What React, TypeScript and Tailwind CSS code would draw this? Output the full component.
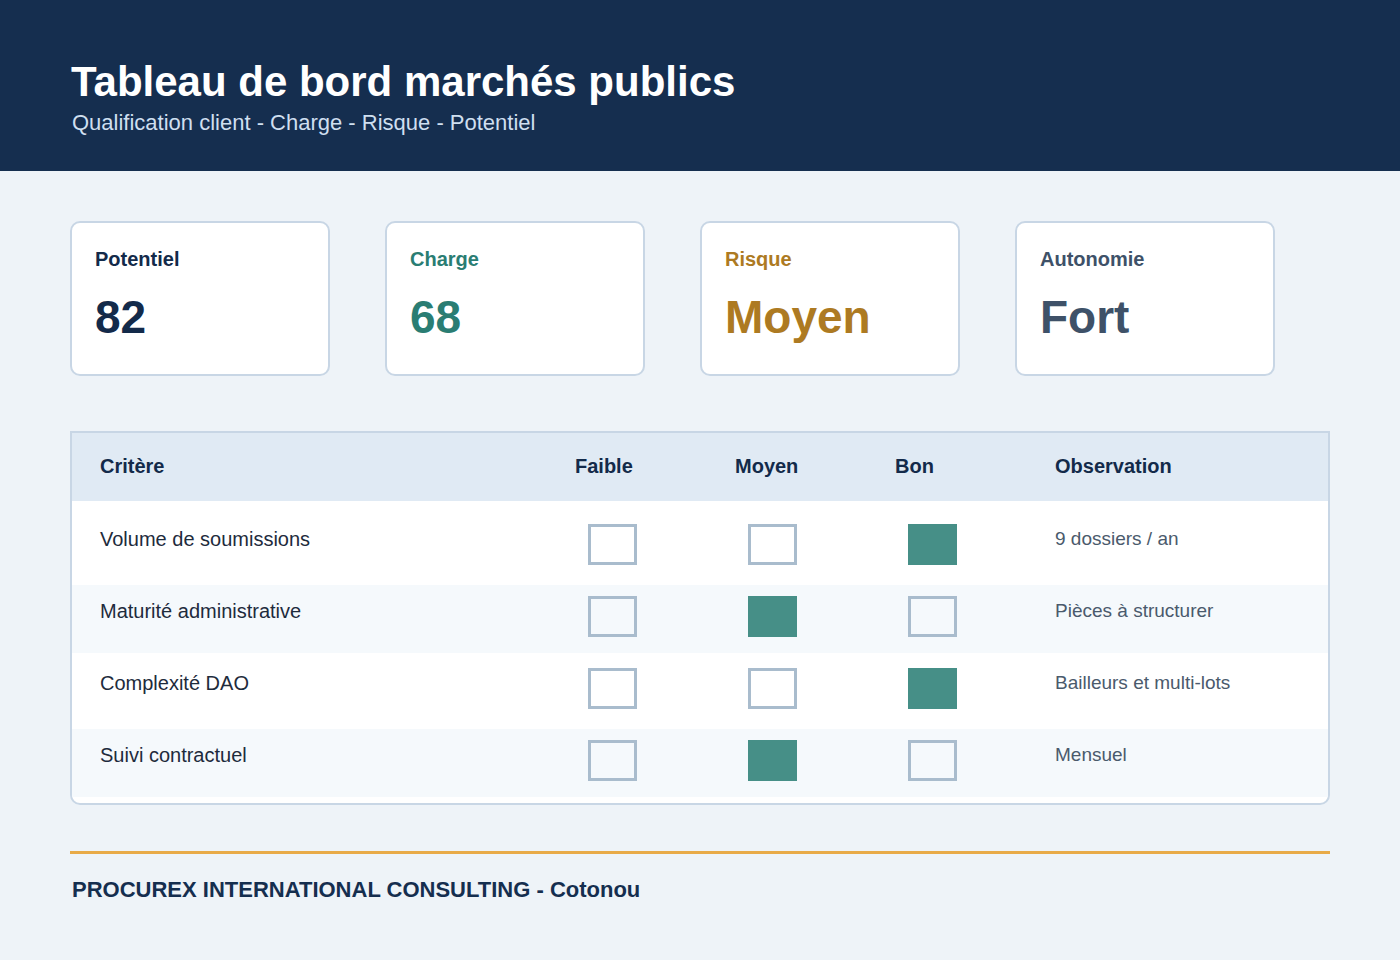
import React from "react";

const cards = [
  { l: "Potentiel", v: "82", c: "text-[#132a4a]" },
  { l: "Charge", v: "68", c: "text-[#2a7d73]" },
  { l: "Risque", v: "Moyen", c: "text-[#ad7a22]" },
  { l: "Autonomie", v: "Fort", c: "text-[#3e5168]" },
];
const rows: [string, number, string][] = [
  ["Volume de soumissions", 2, "9 dossiers / an"],
  ["Maturité administrative", 1, "Pièces à structurer"],
  ["Complexité DAO", 2, "Bailleurs et multi-lots"],
  ["Suivi contractuel", 1, "Mensuel"],
];

function Box({ on }: { on: boolean }) {
  return on ? (
    <div className="ml-[43px] mt-[11px] w-[49px] h-[41px] bg-[#468f87]" />
  ) : (
    <div className="ml-[43px] mt-[11px] w-[49px] h-[41px] border-[3px] border-[#a9bccd]" />
  );
}

export default function App() {
  return (
    <div className="w-[1400px] h-[960px] bg-[#eef3f8]" style={{ fontFamily: '"Liberation Sans", Arial, sans-serif' }}>
      <div className="h-[171px] bg-[#152e4f] pl-[71px] pt-[58px]">
        <div className="text-[42px] leading-[48px] font-bold text-white">Tableau de bord marchés publics</div>
        <div className="text-[22px] leading-[28px] text-[#cfdff0] ml-[1px] mt-[3px]">Qualification client - Charge - Risque - Potentiel</div>
      </div>
      <div className="flex gap-[55px] px-[70px] pt-[50px]">
        {cards.map((c) => (
          <div key={c.l} className="w-[260px] h-[155px] bg-white border-2 border-[#c8d6e5] rounded-[10px] pl-[23px] pt-[22px]">
            <div className={`text-[20px] leading-[28px] font-bold ${c.c}`}>{c.l}</div>
            <div className={`text-[46px] leading-[52px] font-bold mt-[18px] ${c.c}`}>{c.v}</div>
          </div>
        ))}
      </div>
      <div className="mx-[70px] mt-[55px] bg-white border-2 border-[#c8d6e5] rounded-b-[10px] overflow-hidden">
        <div className="flex h-[70px] items-center bg-[#e0eaf4] text-[20px] font-bold text-[#132a4a] -mt-[2px] -mx-[2px]">
          <div className="w-[475px] pl-[30px]">Critère</div>
          <div className="w-[160px] pl-[30px]">Faible</div>
          <div className="w-[160px] pl-[30px]">Moyen</div>
          <div className="w-[160px] pl-[30px]">Bon</div>
          <div className="pl-[30px]">Observation</div>
        </div>
        <div className="flex flex-col gap-[4px] pt-[12px] pb-[6px]">
          {rows.map(([n, s, o], i) => (
            <div key={n} className={`flex h-[68px] -mx-[2px] ${i % 2 ? "bg-[#f5f9fc]" : "bg-white"}`}>
              <div className="w-[475px] pl-[30px] pt-[12px] text-[20px] leading-[28px] text-[#1e2b3c]">{n}</div>
              {[0, 1, 2].map((k) => (
                <div key={k} className="w-[160px]"><Box on={k === s} /></div>
              ))}
              <div className="pl-[30px] pt-[12px] text-[19px] leading-[28px] text-[#4a5a6c]">{o}</div>
            </div>
          ))}
        </div>
      </div>
      <div className="mx-[70px] mt-[46px] h-[3px] bg-[#e8aa48]" />
      <div className="ml-[72px] mt-[22px] text-[22px] leading-[28px] font-bold text-[#152e4f]">PROCUREX INTERNATIONAL CONSULTING - Cotonou</div>
    </div>
  );
}
